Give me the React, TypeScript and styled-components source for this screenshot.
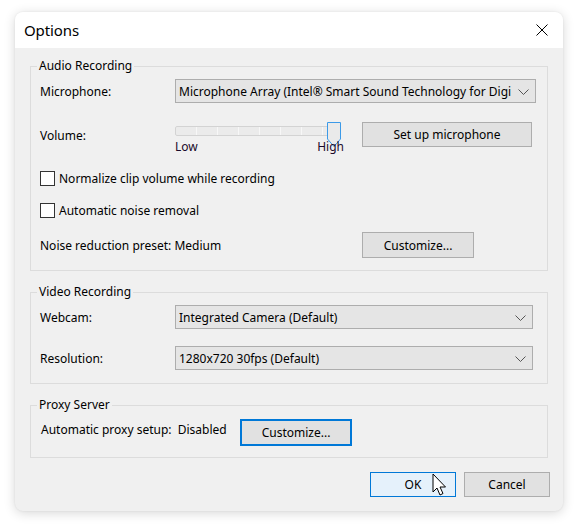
import React from "react"
import styled, { createGlobalStyle } from "styled-components"

const GlobalStyle = createGlobalStyle`
  html, body {
    margin: 0;
    padding: 0;
    background: #ffffff;
  }
  body {
    font-family: "Noto Sans", "Open Sans", sans-serif;
    font-size: 12px;
    color: #000;
  }
`

const Page = styled.div`
  width: 578px;
  height: 531px;
  padding: 12px 15px 0 15px;
  box-sizing: border-box;
`

const Dialog = styled.div`
  width: 548px;
  height: 499px;
  border-radius: 8px;
  background: #f0f0f0;
  box-shadow: 0 2px 12px rgba(0, 0, 0, 0.16), 0 0 2px rgba(0, 0, 0, 0.08);
  overflow: hidden;
  display: flex;
  flex-direction: column;
`

const TitleBar = styled.div`
  height: 36px;
  background: #ffffff;
  display: flex;
  align-items: center;
  justify-content: space-between;
  padding: 0 14px 0 9px;
  flex-shrink: 0;
`

const Title = styled.div`
  font-size: 15px;
  color: #000;
  letter-spacing: -0.1px;
`

const CloseButton = styled.div`
  width: 14px;
  height: 14px;
  display: flex;
  align-items: center;
  justify-content: center;
`

const Body = styled.div`
  padding: 10px 15px 0 15px;
  display: flex;
  flex-direction: column;
`

const Group = styled.fieldset<{ $bottom: number }>`
  margin: 0 0 ${(p) => p.$bottom}px 0;
  padding: 0;
  border: 1px solid #dcdcdc;
  min-width: 0;
`

const Legend = styled.legend`
  margin-left: 6px;
  padding: 0 2px;
  font-size: 12px;
  line-height: 16px;
`

const GroupInner = styled.div<{ $pad: string }>`
  padding: ${(p) => p.$pad};
  display: flex;
  flex-direction: column;
`

const Row = styled.div<{ $h: number; $mt?: number }>`
  height: ${(p) => p.$h}px;
  margin-top: ${(p) => p.$mt || 0}px;
  display: flex;
  align-items: center;
`

const Label = styled.div<{ $w?: number; $top?: number }>`
  width: ${(p) => (p.$w ? `${p.$w}px` : "auto")};
  flex-shrink: 0;
  white-space: nowrap;
  ${(p) => (p.$top !== undefined ? `align-self: flex-start; margin-top: ${p.$top}px;` : "")}
`

const SelectBox = styled.div<{ $w: number }>`
  width: ${(p) => p.$w}px;
  height: 24px;
  box-sizing: border-box;
  border: 1px solid #adadad;
  background: #e5e5e5;
  display: flex;
  align-items: center;
  padding-left: 3px;
  position: relative;
`

const SelectText = styled.div`
  flex: 1;
  overflow: hidden;
  white-space: nowrap;
  margin-right: 24px;
`

const Chevron = styled.svg`
  position: absolute;
  right: 6px;
  top: 9px;
`

const Button = styled.div<{ $w: number; $h: number; $variant?: "focus" | "default"; $top?: boolean }>`
  width: ${(p) => p.$w}px;
  height: ${(p) => p.$h}px;
  box-sizing: border-box;
  display: flex;
  align-items: center;
  justify-content: center;
  flex-shrink: 0;
  position: relative;
  ${(p) => (p.$top ? "align-self: flex-start;" : "")}
  background: ${(p) => (p.$variant === "default" ? "#e5f1fb" : "#e1e1e1")};
  border: ${(p) =>
    p.$variant === "focus"
      ? "2px solid #0078d7"
      : p.$variant === "default"
        ? "1px solid #0078d7"
        : "1px solid #adadad"};
`

const SliderWrap = styled.div`
  width: 167px;
  height: 33px;
  margin-right: 20px;
  position: relative;
  align-self: flex-start;
`

const Track = styled.div`
  position: absolute;
  left: 0;
  top: 4px;
  width: 166px;
  height: 10px;
  box-sizing: border-box;
  border: 1px solid #d3d3d3;
  border-radius: 2px;
  background: repeating-linear-gradient(
    to right,
    #ebebeb 0,
    #ebebeb 20px,
    #f7f7f7 20px,
    #f7f7f7 21px
  );
`

const Thumb = styled.svg`
  position: absolute;
  left: 152px;
  top: 0;
`

const SliderLabels = styled.div`
  position: absolute;
  left: 0;
  right: -2px;
  top: 17px;
  display: flex;
  justify-content: space-between;
  line-height: 16px;
  color: #1a0a2a;
`

const CheckRow = styled.label`
  display: flex;
  align-items: center;
  gap: 4px;
`

const CheckBox = styled.span`
  width: 15px;
  height: 15px;
  box-sizing: border-box;
  border: 1px solid #333;
  background: #fff;
  flex-shrink: 0;
`

const Footer = styled.div`
  display: flex;
  justify-content: flex-end;
  gap: 8px;
  margin-right: -2px;
`

const Cursor = styled.svg`
  position: absolute;
  left: 61px;
  top: 0px;
`

function Select({ width, children }: { width: number; children: React.ReactNode }) {
  return (
    <SelectBox $w={width}>
      <SelectText>{children}</SelectText>
      <Chevron width="11" height="6" viewBox="0 0 11 6">
        <path d="M0.5 0.5 L5.5 5.5 L10.5 0.5" fill="none" stroke="#555" strokeWidth="1" />
      </Chevron>
    </SelectBox>
  )
}

export default function App() {
  return (
    <>
      <GlobalStyle />
      <Page>
        <Dialog>
          <TitleBar>
            <Title>Options</Title>
            <CloseButton>
              <svg width="12" height="12" viewBox="0 0 12 12">
                <path d="M0.5 0.5 L11.5 11.5 M11.5 0.5 L0.5 11.5" stroke="#000" strokeWidth="1" />
              </svg>
            </CloseButton>
          </TitleBar>
          <Body>
            <Group $bottom={13}>
              <Legend>Audio Recording</Legend>
              <GroupInner $pad="5px 13px 12px 9px">
                <Row $h={24}>
                  <Label $w={135}>Microphone:</Label>
                  <Select width={361}>
                    Microphone Array (Intel® Smart Sound Technology for Digital Microphones)
                  </Select>
                </Row>
                <Row $h={33} $mt={19}>
                  <Label $w={135} $top={5}>
                    Volume:
                  </Label>
                  <SliderWrap>
                    <Track />
                    <Thumb width="15" height="26" viewBox="0 0 15 26">
                      <path
                        d="M0.5 0.5 H13.5 V17 L7 24.5 L0.5 17 Z"
                        fill="#eaeaea"
                        stroke="#3c9ae8"
                        strokeWidth="1"
                      />
                    </Thumb>
                    <SliderLabels>
                      <span>Low</span>
                      <span>High</span>
                    </SliderLabels>
                  </SliderWrap>
                  <Button $w={170} $h={25} $top>
                    Set up microphone
                  </Button>
                </Row>
                <Row $h={16} $mt={15}>
                  <CheckRow>
                    <CheckBox />
                    Normalize clip volume while recording
                  </CheckRow>
                </Row>
                <Row $h={16} $mt={16}>
                  <CheckRow>
                    <CheckBox />
                    Automatic noise removal
                  </CheckRow>
                </Row>
                <Row $h={26} $mt={14}>
                  <Label $w={322}>Noise reduction preset: Medium</Label>
                  <Button $w={112} $h={26}>Customize...</Button>
                </Row>
              </GroupInner>
            </Group>

            <Group $bottom={13}>
              <Legend>Video Recording</Legend>
              <GroupInner $pad="5px 14px 13px 9px">
                <Row $h={24}>
                  <Label $w={135}>Webcam:</Label>
                  <Select width={359}>Integrated Camera (Default)</Select>
                </Row>
                <Row $h={24} $mt={17}>
                  <Label $w={135}>Resolution:</Label>
                  <Select width={359}>1280x720 30fps (Default)</Select>
                </Row>
              </GroupInner>
            </Group>

            <Group $bottom={14}>
              <Legend>Proxy Server</Legend>
              <GroupInner $pad="6px 14px 12px 10px">
                <Row $h={26}>
                  <Label $w={199} $top={2}>
                    Automatic proxy setup:&nbsp; Disabled
                  </Label>
                  <Button $w={112} $h={27} $variant="focus">
                    Customize...
                  </Button>
                </Row>
              </GroupInner>
            </Group>

            <Footer>
              <Button $w={86} $h={25} $variant="default">
                OK
                <Cursor width="15" height="24" viewBox="0 0 15 24">
                  <path
                    d="M1 1 V19 L5 15 L8 22 L11 20.5 L8 14 L13.5 14 Z"
                    fill="#fff"
                    stroke="#000"
                    strokeWidth="1"
                    strokeLinejoin="round"
                  />
                </Cursor>
              </Button>
              <Button $w={86} $h={25}>Cancel</Button>
            </Footer>
          </Body>
        </Dialog>
      </Page>
    </>
  )
}
